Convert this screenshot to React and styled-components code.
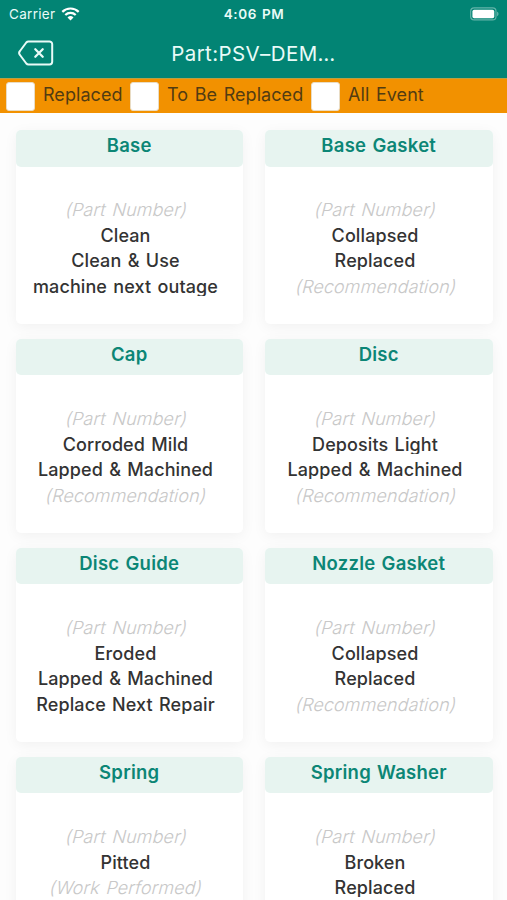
import styled, { createGlobalStyle } from "styled-components";

const GlobalStyle = createGlobalStyle`
  * {
    box-sizing: border-box;
  }

  body {
    margin: 0;
    background: #fdfdfd;
    font-family: Inter, "Liberation Sans", sans-serif;
    overflow: hidden;
  }
`;

const StyledApp = styled.div`
  height: 900px;
  overflow: hidden;
`;
const Header = styled.header`
  height: 78px;
  background: #028474;
  color: #e9fbf8;
`;
const StatusBar = styled.div`
  height: 27px;
  padding: 0 8px 0 9px;
  display: grid;
  grid-template-columns: 1fr auto 1fr;
  align-items: center;
`;
const Carrier = styled.div`
  display: flex;
  align-items: center;
  gap: 6px;
  font-size: 13.5px;
  letter-spacing: 0.3px;
`;
const Clock = styled.div`
  font-size: 13.5px;
  font-weight: 600;
  letter-spacing: 0.6px;
  word-spacing: 1px;
`;
const BatteryIcon = styled.svg`
  justify-self: end;
`;
const TitleBar = styled.div`
  height: 51px;
  padding: 0 18px;
  display: grid;
  grid-template-columns: 36px 1fr 36px;
  align-items: center;
`;
const BackButton = styled.button`
  display: flex;
  padding: 0;
  border: 0;
  background: transparent;
  color: inherit;
`;
const PageTitle = styled.h1`
  margin: 2px 0 0;
  text-align: center;
  font-size: 20.5px;
  font-weight: 400;
  letter-spacing: 0.4px;
`;

const FilterBar = styled.div`
  height: 35px;
  padding-left: 6px;
  display: flex;
  align-items: center;
  background: #f29100;
  border-top: 1px solid #b9a044;
`;
const Filter = styled.label`
  width: ${(props) => props.$width}px;
  display: flex;
  align-items: center;
  gap: 8px;
  color: #523c12;
  font-size: 18px;
  letter-spacing: 0.05px;
  line-height: 30px;
  word-spacing: 1.5px;
  white-space: nowrap;

  span {
    padding-bottom: 2px;
  }
`;
const Checkbox = styled.input`
  appearance: none;
  flex: none;
  width: 29px;
  height: 29px;
  margin: 0;
  background: #fff;
  border: 1px solid #e9dcc4;
  border-radius: 3px;
`;

const PartGrid = styled.main`
  padding: 17px 14px 0 15.5px;
  display: grid;
  grid-template-columns: 227.5px 227.5px;
  column-gap: 22px;
  row-gap: 15.3px;
`;
const Card = styled.article`
  height: 193.7px;
  background: #fff;
  border-radius: 5px;
  box-shadow: 0 3px 14px rgba(0, 0, 0, 0.05);
`;
const CardTitle = styled.h2`
  height: 36.5px;
  margin: 0;
  background: #e7f4f0;
  border-radius: 5px;
  color: #0c8676;
  font-size: 18.5px;
  font-weight: 600;
  letter-spacing: 0.25px;
  word-spacing: 1.2px;
  line-height: 31px;
  text-align: center;
`;
const CardBody = styled.div`
  padding: 32.5px 7.5px 0 0;
  display: flex;
  flex-direction: column;
  align-items: center;
  gap: 5.7px;
`;
const Line = styled.div`
  width: 100%;
  height: 20px;
  overflow: hidden;
  text-align: center;
  white-space: nowrap;
  font-size: 18px;
  line-height: 22px;
  font-weight: 500;
  letter-spacing: 0.1px;
  word-spacing: 1.4px;
  color: #333;
`;
const Placeholder = styled.span`
  display: inline-block;
  padding-left: 2px;
  font-weight: 300;
  color: #c8c8c8;
  transform: skewX(-14deg);
`;

const filters = [
  { label: "Replaced", width: 124 },
  { label: "To Be Replaced", width: 181 },
  { label: "All Event", width: 130 },
];

const placeholders = ["Part Number", "Condition", "Work Performed", "Recommendation"];

const parts = [
  { name: "Base", values: ["", "Clean", "Clean & Use", "machine next outage"] },
  { name: "Base Gasket", values: ["", "Collapsed", "Replaced", ""] },
  { name: "Cap", values: ["", "Corroded Mild", "Lapped & Machined", ""] },
  { name: "Disc", values: ["", "Deposits Light", "Lapped & Machined", ""] },
  {
    name: "Disc Guide",
    values: ["", "Eroded", "Lapped & Machined", "Replace Next Repair"],
  },
  { name: "Nozzle Gasket", values: ["", "Collapsed", "Replaced", ""] },
  // the last row runs past the bottom of the screen
  { name: "Spring", values: ["", "Pitted", ""] },
  { name: "Spring Washer", values: ["", "Broken", "Replaced"] },
];

function PartCard({ part }) {
  return (
    <Card>
      <CardTitle>{part.name}</CardTitle>
      <CardBody>
        {part.values.map((value, i) => (
          <Line key={placeholders[i]}>
            {value || <Placeholder>({placeholders[i]})</Placeholder>}
          </Line>
        ))}
      </CardBody>
    </Card>
  );
}

function App() {
  return (
    <StyledApp>
      <GlobalStyle />
      <Header>
        <StatusBar>
          <Carrier>
            Carrier
            <svg width="19" height="14" viewBox="0 0 19 14" fill="none">
              <path
                d="M1.3 4.9a11.6 11.6 0 0 1 16.4 0M4.3 8a7.4 7.4 0 0 1 10.4 0"
                stroke="#fff"
                strokeWidth="2.2"
              />
              <path d="M9.5 13.6 6.5 10.5a4.3 4.3 0 0 1 6 0z" fill="#fff" />
            </svg>
          </Carrier>
          <Clock>4:06 PM</Clock>
          <BatteryIcon width="29" height="14" viewBox="0 0 30 14">
            <rect
              x="0.7"
              y="0.7"
              width="26.2"
              height="12.4"
              rx="3.6"
              fill="none"
              stroke="#64b3a9"
              strokeWidth="1.2"
            />
            <rect x="2.5" y="2.5" width="22.6" height="8.8" rx="1.8" fill="#fff" />
            <path d="M28 4.7c2 .7 2 3.8 0 4.5z" fill="#64b3a9" />
          </BatteryIcon>
        </StatusBar>
        <TitleBar>
          <BackButton aria-label="Back">
            <svg
              width="36"
              height="26"
              viewBox="0 0 36 26"
              fill="none"
              stroke="currentColor"
              strokeWidth="2"
              strokeLinejoin="round"
              strokeLinecap="round"
            >
              <path d="M10.5 1.5H31.5a2.7 2.7 0 0 1 2.7 2.7v17.6a2.7 2.7 0 0 1-2.7 2.7H10.5a3 3 0 0 1-2.2-1L2 15a3 3 0 0 1 0-4L8.3 2.5a3 3 0 0 1 2.2-1z" />
              <path d="m17.3 9.3 7.4 7.4m0-7.4-7.4 7.4" strokeWidth="2.3" />
            </svg>
          </BackButton>
          <PageTitle>Part:PSV–DEM…</PageTitle>
        </TitleBar>
      </Header>
      <FilterBar>
        {filters.map((filter) => (
          <Filter key={filter.label} $width={filter.width}>
            <Checkbox type="checkbox" />
            <span>{filter.label}</span>
          </Filter>
        ))}
      </FilterBar>
      <PartGrid>
        {parts.map((part) => (
          <PartCard key={part.name} part={part} />
        ))}
      </PartGrid>
    </StyledApp>
  );
}

export default App;
